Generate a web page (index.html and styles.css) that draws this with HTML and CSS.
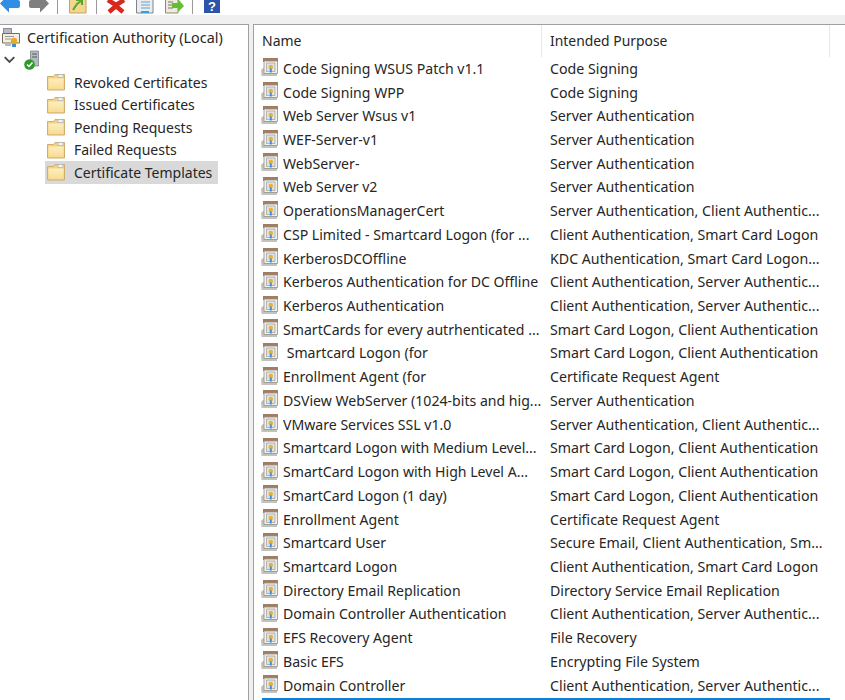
FILE: index.html
```html
<!DOCTYPE html>
<html lang="en">
<head>
<meta charset="utf-8">
<title>Certification Authority</title>
<link rel="stylesheet" href="styles.css">
</head>
<body>
<svg width="0" height="0" class="defs">
  <defs>
    <linearGradient id="fold" x1="0" y1="0" x2="0" y2="1"><stop offset="0" stop-color="#fdeebf"/><stop offset="1" stop-color="#f8dc94"/></linearGradient>
  </defs>
  <symbol id="folder" viewBox="0 0 18 18">
    <path d="M.5 3.500h6l1.500-2h9.500v15.500h-17z" fill="#f3d182" stroke="#cfae70"/>
    <path d="M11 1.500h5v3h-5z" fill="#f4f4ee" stroke="#a8b4bc" stroke-width=".7"/>
    <path d="M1.500 5.500h15v10.500h-15z" fill="url(#fold)"/>
  </symbol>
  <symbol id="cert" viewBox="0 0 18 18">
    <path d="M0 12l2-2h14v8h-15.500z" fill="#c3c3be"/>
    <path d="M2 0h15v4h-15z" fill="#a27d62"/>
    <path d="M3 3h13.500v12.500h-13.500z" fill="#f2f0ea" stroke="#8f8f8a" stroke-width=".8"/>
    <path d="M5.500 5h8.500v8.500h-8.500z" fill="#d8e5f1" stroke="#9c8f80" stroke-width=".6"/>
    <circle cx="9.800" cy="9" r="2.300" fill="#efb02e"/>
    <path d="M8.800 10.500h2v4h-2z" fill="#3c8fdc"/>
  </symbol>
</svg>
<header class="toolbar">
  <svg class="tool-icons" width="240" height="15" viewBox="0 0 240 15">
    <path d="M0 3.500 9-6v6h9q2 0 2 2v4q0 2-2 2H9v4.500z" fill="#2f8fe6"/>
    <path d="M49 3.500 40-6v6h-9q-2 0-2 2v4q0 2 2 2h9v4.500z" fill="#7f7f7f"/>
    <path d="M57.500 0v14M96.500 0v14M192.500 0v14" stroke="#9a9a9a"/>
    <path d="M69.500-1h16.500v14h-16.500z" fill="#f3d78f" stroke="#c4a25c"/>
    <path d="M73 10l4-6 4-3M76 0h6v5" fill="none" stroke="#58a62c" stroke-width="2"/>
    <path d="M108 0l8 5 8-5M109 12l7-6 7 6" fill="none" stroke="#d9281c" stroke-width="4.500"/>
    <path d="M136.500-1h16.500v14h-16.500z" fill="#e9edf0" stroke="#7f858c"/>
    <path d="M141 2h9M141 5h9M141 8h9" stroke="#6aa0c8"/>
    <path d="M141 12h8" stroke="#35a0e0" stroke-width="2"/>
    <path d="M165.500-1h12.500v14h-12.500z" fill="#f0ead8" stroke="#8f897a"/>
    <path d="M168 2h5M168 5h5M168 8h5" stroke="#777"/>
    <path d="M172 3h6V-1l6 7-6 6V8h-6z" fill="#63bd36"/>
    <path d="M204 -1h16v14h-16z" fill="#2b55a8"/>
    <text x="212" y="11" class="help-mark" text-anchor="middle">?</text>
  </svg>
</header>
<div class="band"></div>
<main class="panes">
  <nav class="tree">
    <div class="tree-root">
      <svg class="root-icon" width="19" height="19" viewBox="0 0 19 19">
        <path d="M1.500 .5h8v6h-8z" fill="#b8bcc2" stroke="#6f747c" stroke-width=".8"/>
        <path d="M.5 5.500h17v9.500h-17z" fill="#f3efe3" stroke="#7c6a5a"/>
        <path d="M3 8.500h9M3 11h6" stroke="#9a9a9a"/>
        <circle cx="12" cy="13" r="3.200" fill="#e9a92c"/>
        <path d="M3 15h6v3h-6z" fill="#b8bcc2"/>
        <path d="M10 16h4v3h-4z" fill="#3e8ecc"/>
      </svg>
      <span>Certification Authority (Local)</span>
    </div>
    <div class="tree-server">
      <svg width="11" height="8" viewBox="0 0 11 8" class="chev"><path d="M.7 1.200l4.800 4.800 4.800-4.800" fill="none" stroke="#4a4a4a" stroke-width="1.900"/></svg>
      <svg width="16" height="20" viewBox="0 0 16 20" class="server">
        <path d="M6.500 1h8v15h-8z" fill="#b4bac0" stroke="#7f858c" stroke-width=".8"/>
        <path d="M8 4h5M8 7h5" stroke="#555b62"/>
        <circle cx="5.500" cy="14.500" r="5.300" fill="#2f9a2b"/>
        <path d="M3 14.500l2 2 3.500-4" fill="none" stroke="#fff" stroke-width="1.500"/>
      </svg>
    </div>
    <ul class="tree-list">
      <li class="tree-item"><svg class="ficon"><use href="#folder"/></svg><span>Revoked Certificates</span></li>
      <li class="tree-item"><svg class="ficon"><use href="#folder"/></svg><span>Issued Certificates</span></li>
      <li class="tree-item"><svg class="ficon"><use href="#folder"/></svg><span>Pending Requests</span></li>
      <li class="tree-item"><svg class="ficon"><use href="#folder"/></svg><span>Failed Requests</span></li>
      <li class="tree-item selected"><svg class="ficon"><use href="#folder"/></svg><span>Certificate Templates</span></li>
    </ul>
  </nav>
  <section class="list">
    <div class="head">
      <div class="col-name">Name</div>
      <div class="col-purpose">Intended Purpose</div>
    </div>
    <div class="rows">
      <div class="row"><svg class="cicon"><use href="#cert"/></svg><span class="name">Code Signing WSUS Patch v1.1</span><span class="purpose">Code Signing</span></div>
      <div class="row"><svg class="cicon"><use href="#cert"/></svg><span class="name">Code Signing WPP</span><span class="purpose">Code Signing</span></div>
      <div class="row"><svg class="cicon"><use href="#cert"/></svg><span class="name">Web Server Wsus v1</span><span class="purpose">Server Authentication</span></div>
      <div class="row"><svg class="cicon"><use href="#cert"/></svg><span class="name">WEF-Server-v1</span><span class="purpose">Server Authentication</span></div>
      <div class="row"><svg class="cicon"><use href="#cert"/></svg><span class="name">WebServer-</span><span class="purpose">Server Authentication</span></div>
      <div class="row"><svg class="cicon"><use href="#cert"/></svg><span class="name">Web Server v2</span><span class="purpose">Server Authentication</span></div>
      <div class="row"><svg class="cicon"><use href="#cert"/></svg><span class="name">OperationsManagerCert</span><span class="purpose">Server Authentication, Client Authentic...</span></div>
      <div class="row"><svg class="cicon"><use href="#cert"/></svg><span class="name">CSP Limited - Smartcard Logon (for ...</span><span class="purpose">Client Authentication, Smart Card Logon</span></div>
      <div class="row"><svg class="cicon"><use href="#cert"/></svg><span class="name">KerberosDCOffline</span><span class="purpose">KDC Authentication, Smart Card Logon...</span></div>
      <div class="row"><svg class="cicon"><use href="#cert"/></svg><span class="name">Kerberos Authentication for DC Offline</span><span class="purpose">Client Authentication, Server Authentic...</span></div>
      <div class="row"><svg class="cicon"><use href="#cert"/></svg><span class="name">Kerberos Authentication</span><span class="purpose">Client Authentication, Server Authentic...</span></div>
      <div class="row"><svg class="cicon"><use href="#cert"/></svg><span class="name">SmartCards for every autrhenticated ...</span><span class="purpose">Smart Card Logon, Client Authentication</span></div>
      <div class="row"><svg class="cicon"><use href="#cert"/></svg><span class="name">&nbsp;Smartcard Logon (for</span><span class="purpose">Smart Card Logon, Client Authentication</span></div>
      <div class="row"><svg class="cicon"><use href="#cert"/></svg><span class="name">Enrollment Agent (for</span><span class="purpose">Certificate Request Agent</span></div>
      <div class="row"><svg class="cicon"><use href="#cert"/></svg><span class="name">DSView WebServer (1024-bits and hig...</span><span class="purpose">Server Authentication</span></div>
      <div class="row"><svg class="cicon"><use href="#cert"/></svg><span class="name">VMware Services SSL v1.0</span><span class="purpose">Server Authentication, Client Authentic...</span></div>
      <div class="row"><svg class="cicon"><use href="#cert"/></svg><span class="name">Smartcard Logon with Medium Level...</span><span class="purpose">Smart Card Logon, Client Authentication</span></div>
      <div class="row"><svg class="cicon"><use href="#cert"/></svg><span class="name">SmartCard Logon with High Level A...</span><span class="purpose">Smart Card Logon, Client Authentication</span></div>
      <div class="row"><svg class="cicon"><use href="#cert"/></svg><span class="name">SmartCard Logon (1 day)</span><span class="purpose">Smart Card Logon, Client Authentication</span></div>
      <div class="row"><svg class="cicon"><use href="#cert"/></svg><span class="name">Enrollment Agent</span><span class="purpose">Certificate Request Agent</span></div>
      <div class="row"><svg class="cicon"><use href="#cert"/></svg><span class="name">Smartcard User</span><span class="purpose">Secure Email, Client Authentication, Sm...</span></div>
      <div class="row"><svg class="cicon"><use href="#cert"/></svg><span class="name">Smartcard Logon</span><span class="purpose">Client Authentication, Smart Card Logon</span></div>
      <div class="row"><svg class="cicon"><use href="#cert"/></svg><span class="name">Directory Email Replication</span><span class="purpose">Directory Service Email Replication</span></div>
      <div class="row"><svg class="cicon"><use href="#cert"/></svg><span class="name">Domain Controller Authentication</span><span class="purpose">Client Authentication, Server Authentic...</span></div>
      <div class="row"><svg class="cicon"><use href="#cert"/></svg><span class="name">EFS Recovery Agent</span><span class="purpose">File Recovery</span></div>
      <div class="row"><svg class="cicon"><use href="#cert"/></svg><span class="name">Basic EFS</span><span class="purpose">Encrypting File System</span></div>
      <div class="row"><svg class="cicon"><use href="#cert"/></svg><span class="name">Domain Controller</span><span class="purpose">Client Authentication, Server Authentic...</span></div>
    </div>
    <div class="focus-line"></div>
  </section>
</main>
</body>
</html>
```
FILE: styles.css
```css
* { box-sizing: border-box; }
html, body { margin: 0; padding: 0; }
body {
  width: 845px;
  height: 700px;
  overflow: hidden;
  background: #fff;
  color: #262626;
  font-family: "Noto Sans", "Open Sans", sans-serif;
  font-size: 14px;
  display: flex;
  flex-direction: column;
}
.defs { position: absolute; }
.toolbar { height: 15px; background: #fff; flex: none; }
.tool-icons { display: block; }
.help-mark { fill: #fff; font-size: 13px; font-weight: 700; font-family: "Liberation Sans", sans-serif; }
.band { height: 9px; background: #f0f0f0; flex: none; }
.panes {
  flex: 1;
  display: flex;
  gap: 4px;
  background: #f0f0f0;
  min-height: 0;
}
.tree {
  width: 249px;
  flex: none;
  background: #fff;
  border-top: 1px solid #a0a0a0;
  border-right: 1px solid #a0a0a0;
  padding-top: 1px;
  white-space: nowrap;
}
.tree-root { display: flex; align-items: center; gap: 6px; height: 23px; padding-left: 2px; font-size: 14.350px; }
.root-icon { flex: none; }
.tree-server { display: flex; align-items: center; height: 22px; padding-left: 4px; gap: 9px; }
.chev { flex: none; }
.server { flex: none; }
.tree-list { list-style: none; margin: 0; padding: 0 0 0 45px; }
.tree-item { display: flex; align-items: center; gap: 9px; height: 22.500px; width: 173px; padding-left: 2px; }
.tree-item.selected { background: #d9d9d9; }
.ficon { width: 18px; height: 18px; flex: none; }
.list {
  flex: 1;
  min-width: 0;
  position: relative;
  background: #fff;
  border-top: 1px solid #a0a0a0;
  border-left: 1px solid #a0a0a0;
  overflow: hidden;
}
.head { display: flex; height: 32px; }
.col-name { width: 288px; padding: 6px 0 0 8px; border-right: 1px solid #e6e6e6; }
.col-purpose { width: 288px; padding: 6px 0 0 8px; border-right: 1px solid #e6e6e6; font-size: 13.900px; }
.rows { display: flex; flex-direction: column; padding-left: 7px; margin-top: -.500px; }
.row { display: flex; align-items: center; height: 23.730px; flex: none; white-space: nowrap; }
.cicon { width: 18px; height: 18px; flex: none; margin-right: 4px; position: relative; top: -1px; }
.name { width: 267px; flex: none; overflow: hidden; font-size: 14.100px; }
.purpose { flex: none; font-size: 14.200px; }
.focus-line { position: absolute; left: 8px; right: 15px; bottom: 0; height: 2px; background: #0f7fd8; }
```
